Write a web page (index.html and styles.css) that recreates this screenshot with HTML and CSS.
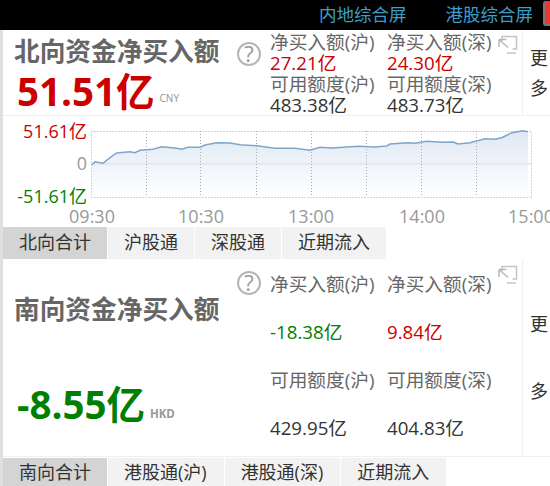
FILE: index.html
```html
<!DOCTYPE html>
<html lang="en">
<head>
    <meta charset="UTF-8">
    <meta name="viewport" content="width=device-width, initial-scale=1.0">
    <title>资金流向</title>
    <link rel="stylesheet" href="styles.css">
</head>
<body>
    <div class="topbar">
        <a class="topbar-link">内地综合屏</a>
        <a class="topbar-link">港股综合屏</a>
        <span class="topbar-btn"></span>
    </div>

    <div class="page">
        <div class="panel panel-north">
            <div class="summary">
                <div class="summary-title">北向资金净买入额</div>
                <div class="summary-value up">51.51亿<span class="unit">CNY</span></div>
            </div>
            <div class="help">?</div>
            <div class="stats">
                <div class="stat-label">净买入额(沪)</div>
                <div class="stat-label">净买入额(深)</div>
                <div class="stat-value up">27.21亿</div>
                <div class="stat-value up">24.30亿</div>
                <div class="stat-label">可用额度(沪)</div>
                <div class="stat-label">可用额度(深)</div>
                <div class="stat-value">483.38亿</div>
                <div class="stat-value">483.73亿</div>
            </div>
            <svg class="expand" width="20" height="20" viewBox="0 0 20 20">
                <path d="M4 6V1.500H18.500V14H14.500" fill="none" stroke="#c4c4c4" stroke-width="1.500"/>
                <path d="M1 4.500H8.500M1 4.500V12M1.500 5L10 12.500" fill="none" stroke="#b8b8b8" stroke-width="1.500"/>
                <path d="M9 18H18" stroke="#c4c4c4" stroke-width="1.500"/>
            </svg>
            <div class="more">更<br>多</div>
        </div>

        <svg class="chart" width="547" height="111" viewBox="3 115 547 111">
            <defs>
                <linearGradient id="area" x1="0" y1="0" x2="0" y2="1">
                    <stop offset="0" stop-color="#dfe8f3"/>
                    <stop offset="1" stop-color="#ffffff"/>
                </linearGradient>
            </defs>
            <path d="M91.700 196V164L95 160.700L103 162.300L110 156.700L116.700 152L130 150.700L135 151.700L140 149.300L153 148.300L161.700 145.700L176.700 147.300L181.700 148.300L188 146.300L200 146.300L205 144L216.700 141.700L230 142L240 143.700L256.700 144.700L275 147.300L295 147.300L310 149.300L320 146.300L331.700 147L358 145.300L375 146L386.700 145L390 143L408 141.700L415 142.300L426.700 140.300L441.700 141.300L453 141L458 143L470 141.700L485 137.700L495 138.300L501.700 136.700L511.700 131.700L523 129.700L528 130.700V196Z" fill="url(#area)"/>
            <path class="zero" d="M91.500 162.700H531"/>
            <path class="grid" d="M91.500 130.500H531.500V196.500H91.500ZM146.500 130V196M200.500 130V196M256.500 130V196M311.500 130V196M366.500 130V196M421.500 130V196M476.500 130V196"/>
            <path class="line" d="M91.700 164L95 160.700L103 162.300L110 156.700L116.700 152L130 150.700L135 151.700L140 149.300L153 148.300L161.700 145.700L176.700 147.300L181.700 148.300L188 146.300L200 146.300L205 144L216.700 141.700L230 142L240 143.700L256.700 144.700L275 147.300L295 147.300L310 149.300L320 146.300L331.700 147L358 145.300L375 146L386.700 145L390 143L408 141.700L415 142.300L426.700 140.300L441.700 141.300L453 141L458 143L470 141.700L485 137.700L495 138.300L501.700 136.700L511.700 131.700L523 129.700L528 130.700"/>
            <text class="tick up-fill" x="87" y="137" text-anchor="end">51.61亿</text>
            <text class="tick gray-fill" x="87" y="169" text-anchor="end">0</text>
            <text class="tick down-fill" x="87" y="202" text-anchor="end">-51.61亿</text>
            <text class="tick gray-fill" x="92" y="222" text-anchor="middle">09:30</text>
            <text class="tick gray-fill" x="201" y="222" text-anchor="middle">10:30</text>
            <text class="tick gray-fill" x="311" y="222" text-anchor="middle">13:00</text>
            <text class="tick gray-fill" x="422" y="222" text-anchor="middle">14:00</text>
            <text class="tick gray-fill" x="531" y="222" text-anchor="middle">15:00</text>
        </svg>

        <div class="tabs">
            <div class="tab active">北向合计</div>
            <div class="tab">沪股通</div>
            <div class="tab">深股通</div>
            <div class="tab">近期流入</div>
        </div>

        <div class="panel panel-south">
            <div class="summary">
                <div class="summary-title">南向资金净买入额</div>
                <div class="summary-value down">-8.55亿<span class="unit unit-hkd">HKD</span></div>
            </div>
            <div class="help">?</div>
            <div class="stats">
                <div class="stat-label">净买入额(沪)</div>
                <div class="stat-label">净买入额(深)</div>
                <div class="stat-value down">-18.38亿</div>
                <div class="stat-value up">9.84亿</div>
                <div class="stat-label">可用额度(沪)</div>
                <div class="stat-label">可用额度(深)</div>
                <div class="stat-value">429.95亿</div>
                <div class="stat-value">404.83亿</div>
            </div>
            <svg class="expand" width="20" height="20" viewBox="0 0 20 20">
                <path d="M4 6V1.500H18.500V14H14.500" fill="none" stroke="#c4c4c4" stroke-width="1.500"/>
                <path d="M1 4.500H8.500M1 4.500V12M1.500 5L10 12.500" fill="none" stroke="#b8b8b8" stroke-width="1.500"/>
                <path d="M9 18H18" stroke="#c4c4c4" stroke-width="1.500"/>
            </svg>
            <div class="more">更<br>多</div>
        </div>

        <div class="tabs tabs-south">
            <div class="tab active">南向合计</div>
            <div class="tab">港股通(沪)</div>
            <div class="tab">港股通(深)</div>
            <div class="tab">近期流入</div>
        </div>
    </div>
</body>
</html>
```

FILE: styles.css
```css
* {
    box-sizing: border-box;
}

html, body {
    height: 100%;
}

body {
    margin: 0;
    overflow: hidden;
    background-color: #ffffff;
    color: #333333;
    font-family: "Open Sans", "Noto Sans CJK SC", sans-serif;
    font-size: 18px;
}

.up {
    color: #cc0000;
}

.down {
    color: #008000;
}

.topbar {
    display: flex;
    justify-content: flex-end;
    align-items: center;
    gap: 39px;
    height: 30px;
    padding-bottom: 3px;
    background-color: #000000;
}

.topbar-link {
    color: #3d9fc9;
    font-size: 17.500px;
    line-height: 24px;
}

.topbar-btn {
    width: 7px;
    height: 25px;
    margin-left: -29px;
    background-color: #e8392f;
    border: solid #777777;
    border-width: 0 0 2px 2px;
    border-radius: 3px 0 0 3px;
}

.page {
    border-left: 3px solid #e0e0e0;
    height: 456px;
}

.panel {
    position: relative;
    display: flex;
    border-bottom: 1px solid #f0f0f0;
}

.panel-north {
    height: 86px;
}

.panel-south {
    height: 198px;
}

.summary {
    display: flex;
    flex-direction: column;
    width: 233px;
    padding-left: 11px;
    flex: none;
}

.summary-title {
    color: #666666;
    font-size: 25.700px;
    font-weight: 700;
    line-height: 36px;
    white-space: nowrap;
    margin-top: 4px;
}

.summary-value {
    font-size: 38.500px;
    font-weight: 700;
    line-height: 44px;
    white-space: nowrap;
    padding-left: 3px;
    margin-top: -1px;
}

.unit {
    margin-left: 5px;
    color: #8d95a0;
    font-size: 10px;
    font-weight: 400;
    vertical-align: 4px;
}

.unit-hkd {
    color: #999999;
    font-size: 11.500px;
    font-weight: 700;
    vertical-align: 1px;
}

.panel-south .summary-title {
    margin-top: 33px;
}

.panel-south .summary-value {
    margin-top: 54px;
}

.help {
    flex: none;
    width: 24px;
    height: 24px;
    margin-top: 12px;
    margin-left: 1px;
    border: 2px solid #b5b5b5;
    border-radius: 50%;
    color: #999999;
    font-size: 22px;
    line-height: 19px;
    text-align: center;
}

.stats {
    display: grid;
    grid-template-columns: 117px 112px;
    grid-auto-rows: 21px;
    flex: none;
    margin-left: 9px;
}

.panel-north .stats {
    margin-top: 1px;
}

.panel-south .stats {
    grid-auto-rows: 48px;
    margin-top: 1px;
}

.stat-label {
    color: #666666;
    font-size: 18.700px;
    line-height: 21px;
    white-space: nowrap;
}

.stat-value {
    font-size: 18.700px;
    line-height: 21px;
    white-space: nowrap;
}

.panel-south .stat-label,
.panel-south .stat-value {
    line-height: 48px;
}

.expand {
    flex: none;
    margin-top: 5px;
    margin-left: -1px;
}

.panel-south .expand {
    margin-top: 6px;
}

.more {
    display: flex;
    flex-direction: column;
    justify-content: center;
    flex: none;
    margin-left: 4px;
    padding-left: 7px;
    border-left: 1px solid #f0f0f0;
    font-size: 18px;
    line-height: 30px;
    color: #333333;
    white-space: nowrap;
}

.panel-south .more {
    line-height: 67px;
}

.chart {
    display: block;
}

.chart .grid {
    fill: none;
    stroke: #aaaaaa;
    stroke-width: 1;
    stroke-dasharray: 1 2;
}

.chart .zero {
    fill: none;
    stroke: #e4e8ec;
    stroke-width: 2;
}

.chart .line {
    fill: none;
    stroke: #7ea6cc;
    stroke-width: 1.500;
}

.tick {
    font-size: 18px;
}

.up-fill {
    fill: #cc0000;
}

.down-fill {
    fill: #008000;
}

.gray-fill {
    fill: #999999;
}

.tabs {
    display: flex;
    gap: 1px;
    height: 32px;
}

.tabs-south {
    height: 29px;
    margin-top: 1px;
}

.tab {
    padding: 0 16px;
    background-color: #f2f2f2;
    color: #333333;
    font-size: 18px;
    line-height: 30px;
    white-space: nowrap;
}

.tabs-south .tab {
    padding-right: 17px;
    line-height: 29px;
}

.tabs-south .tab.active {
    padding-right: 16px;
}

.tab.active {
    background-color: #d4d4d4;
}
```
